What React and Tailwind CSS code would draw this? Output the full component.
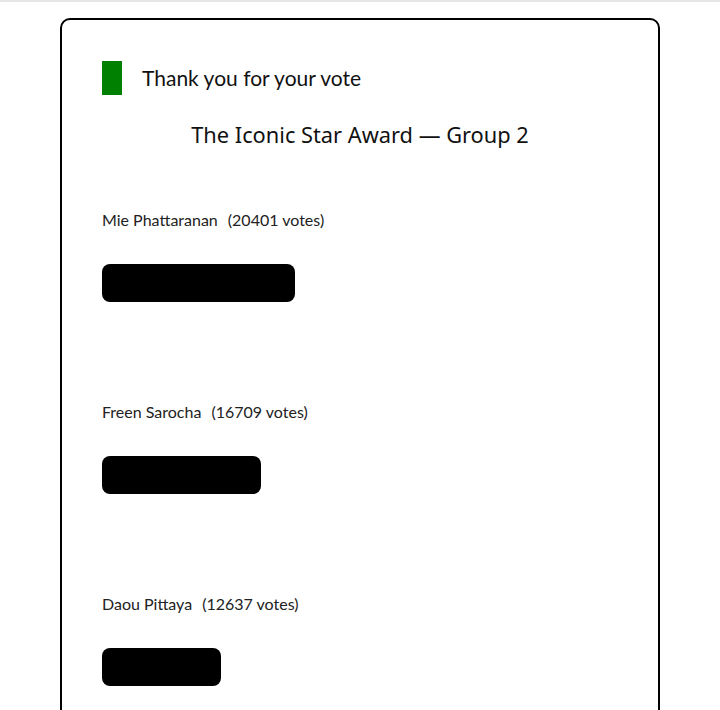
import React from "react";

const results = [
  { name: "Mie Phattaranan", votes: 20401, width: 193 },
  { name: "Freen Sarocha", votes: 16709, width: 159 },
  { name: "Daou Pittaya", votes: 12637, width: 119 },
];

export default function App() {
  return (
    <div className="min-h-[710px] bg-white font-['Lato',sans-serif]">
      <div className="h-[2px] bg-[#e4e6e5]" />
      <div className="mx-[60px] mt-[16px] w-[600px] rounded-[10px] border-2 border-black px-[40px] pt-[41px] pb-[40px]">
        {/* header */}
        <div className="flex items-center gap-5">
          <div className="h-[34px] w-[20px] bg-[#008000]" />
          <p className="text-[21px] text-[#111]">Thank you for your vote</p>
        </div>

        <h1 className="mt-[24px] text-center font-['Noto_Sans',sans-serif] text-[21.8px] text-[#111]">
          The Iconic Star Award — Group 2
        </h1>

        {/* results */}
        <div className="mt-[58px]">
          {results.map((r) => (
            <div key={r.name} className="h-[192px]">
              <p className="text-[16px] leading-[20px] text-[#222]">
                {r.name}
                <span className="ml-[10px]">({r.votes} votes)</span>
              </p>
              <div
                className="mt-[34px] h-[38px] rounded-[8px] bg-black"
                style={{ width: r.width }}
              />
            </div>
          ))}
        </div>
      </div>
    </div>
  );
}
